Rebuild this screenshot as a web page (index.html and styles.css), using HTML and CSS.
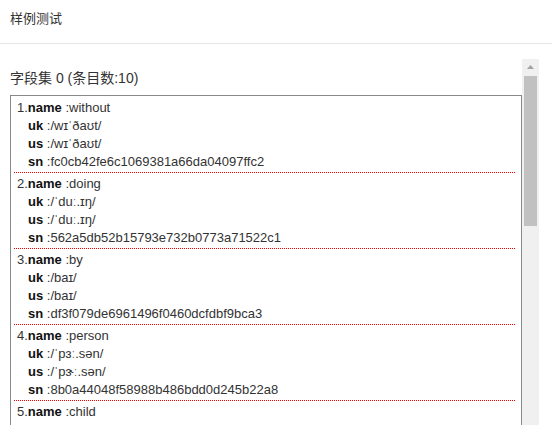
FILE: index.html
```html
<!DOCTYPE html>
<html lang="zh">
<head>
    <meta charset="UTF-8">
    <meta name="viewport" content="width=device-width, initial-scale=1.0">
    <title>样例测试</title>
    <link rel="stylesheet" href="styles.css">
</head>
<body>

    <div class="header">样例测试</div>

    <div class="main">
        <!-- isi field set -->
        <div class="content">
            <div class="set-title">字段集 0 (条目数:10)</div>
            <div class="set-box">
                <div class="item">
                    <div class="row">1.<b>name</b> :without</div>
                    <div class="row sub"><b>uk</b> :/wɪˈðaʊt/</div>
                    <div class="row sub"><b>us</b> :/wɪˈðaʊt/</div>
                    <div class="row sub"><b>sn</b> :fc0cb42fe6c1069381a66da04097ffc2</div>
                </div>
                <div class="item">
                    <div class="row">2.<b>name</b> :doing</div>
                    <div class="row sub"><b>uk</b> :/ˈduː.ɪŋ/</div>
                    <div class="row sub"><b>us</b> :/ˈduː.ɪŋ/</div>
                    <div class="row sub"><b>sn</b> :562a5db52b15793e732b0773a71522c1</div>
                </div>
                <div class="item">
                    <div class="row">3.<b>name</b> :by</div>
                    <div class="row sub"><b>uk</b> :/baɪ/</div>
                    <div class="row sub"><b>us</b> :/baɪ/</div>
                    <div class="row sub"><b>sn</b> :df3f079de6961496f0460dcfdbf9bca3</div>
                </div>
                <div class="item">
                    <div class="row">4.<b>name</b> :person</div>
                    <div class="row sub"><b>uk</b> :/ˈpɜː.sən/</div>
                    <div class="row sub"><b>us</b> :/ˈpɝː.sən/</div>
                    <div class="row sub"><b>sn</b> :8b0a44048f58988b486bdd0d245b22a8</div>
                </div>
                <div class="item">
                    <div class="row">5.<b>name</b> :child</div>
                    <div class="row sub"><b>uk</b> :/tʃaɪld/</div>
                    <div class="row sub"><b>us</b> :/tʃaɪld/</div>
                    <div class="row sub"><b>sn</b> :1b7d5726533ab525a8760351e9b5e415</div>
                </div>
            </div>
        </div>

        <!-- scrollbar palsu (screenshot tidak menampilkan scrollbar asli) -->
        <div class="scrollbar">
            <div class="sb-btn">
                <svg width="7" height="4" viewBox="0 0 7 4"><path d="M3.5 0L7 4H0z" fill="#a3a3a3"/></svg>
            </div>
            <div class="sb-thumb"></div>
        </div>
    </div>

</body>
</html>
```

FILE: styles.css
```css
body {
    margin: 0;
    overflow: hidden;
    background-color: #fff;
    color: #333;
    font-family: "Liberation Sans", "Noto Sans CJK SC", sans-serif;
}
.header {
    height: 44px;
    box-sizing: border-box;
    padding: 9px 10px 0;
    font-size: 13px;
    line-height: 20px;
    border-bottom: 1px solid #e5e5e5;
}
.main {
    display: flex;
    width: 539px;
    height: 380px;
    margin-top: 15px;
}
.content {
    flex: 1;
    min-width: 0;
    overflow: hidden;
    padding: 9px 0 0 10px;
}
.set-title {
    font-size: 14px;
    line-height: 20px;
    margin-bottom: 7px;
}
.set-box {
    border: 1px solid #888;
    padding: 3px 0 4px;
}
.item {
    margin: 0 6px 1px 3px;
    padding: 0 0 2px 3px;
    /* garis titik merah */
    background-image: linear-gradient(to right, #e00 50%, transparent 50%);
    background-size: 2px 1px;
    background-repeat: repeat-x;
    background-position: left bottom;
}
.item + .item {
    padding-top: 1px;
}
.row {
    font-size: 13px;
    line-height: 18px;
    white-space: nowrap;
}
.row b {
    color: #111;
}
.sub {
    padding-left: 11px;
}

/* scrollbar gaya windows */
.scrollbar {
    width: 17px;
    flex-shrink: 0;
    background: #f0f0f0;
    display: flex;
    flex-direction: column;
}
.sb-btn {
    height: 17px;
    display: flex;
    align-items: center;
    justify-content: center;
}
.sb-btn svg {
    display: block;
    margin-top: -1px;
}
.sb-thumb {
    height: 150px;
    margin: 0 2px;
    background: #c1c1c1;
}
```
